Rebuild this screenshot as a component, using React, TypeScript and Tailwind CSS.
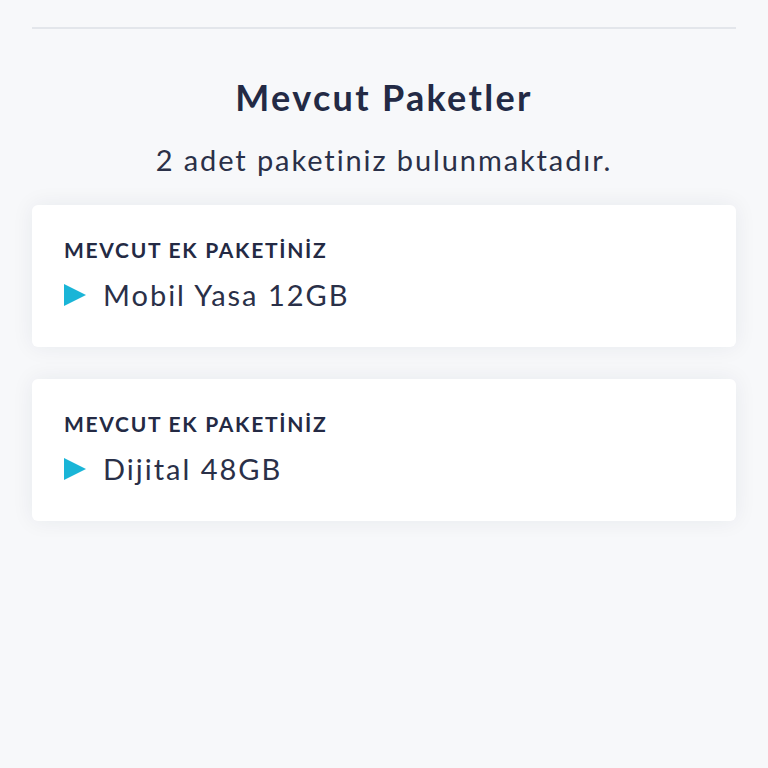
export default function App() {
  const packages = ['Mobil Yasa 12GB', 'Dijital 48GB']

  return (
    <div
      className="min-h-[768px] bg-[#f7f8fa] text-[#242a44]"
      style={{ fontFamily: 'Lato, "Noto Sans", sans-serif' }}
    >
      <div className="overflow-hidden pb-[16px]">
        <div className="px-8 pt-[27px]">
          <div className="h-[2px] bg-[#e3e6eb]" />
        </div>

        {/* Header */}
        <div className="mt-[44px] flex flex-col items-center">
          <h1 className="text-[36px] font-bold leading-[48px] tracking-[2.3px] text-[#232a45]">
            Mevcut Paketler
          </h1>
          <p className="mt-[21px] text-[29px] leading-[36px] tracking-[1.9px] text-[#2a3048]">
            2 adet paketiniz bulunmaktadır.
          </p>
        </div>

        {/* Package cards */}
        <div className="mt-[27px] flex flex-col gap-[32px] px-8">
          {packages.map((name) => (
            <div
              key={name}
              className="h-[142px] rounded-[6px] bg-white px-8 pt-[33px] shadow-[0_0_22px_rgba(30,40,70,0.07)]"
            >
              <p className="text-[21px] font-bold uppercase leading-[24px] tracking-[1.7px] text-[#242a44]">
                MEVCUT EK PAKETİNİZ
              </p>
              <div className="mt-[16px] flex items-center gap-[17px]">
                <svg width="22" height="22" viewBox="0 0 22 22" className="shrink-0">
                  <path d="M0 0 L22 11 L0 22 Z" fill="#1ab5d7" />
                </svg>
                <span className="text-[29px] leading-[34px] tracking-[2px] text-[#2a3048]">{name}</span>
              </div>
            </div>
          ))}
        </div>
      </div>
    </div>
  )
}
